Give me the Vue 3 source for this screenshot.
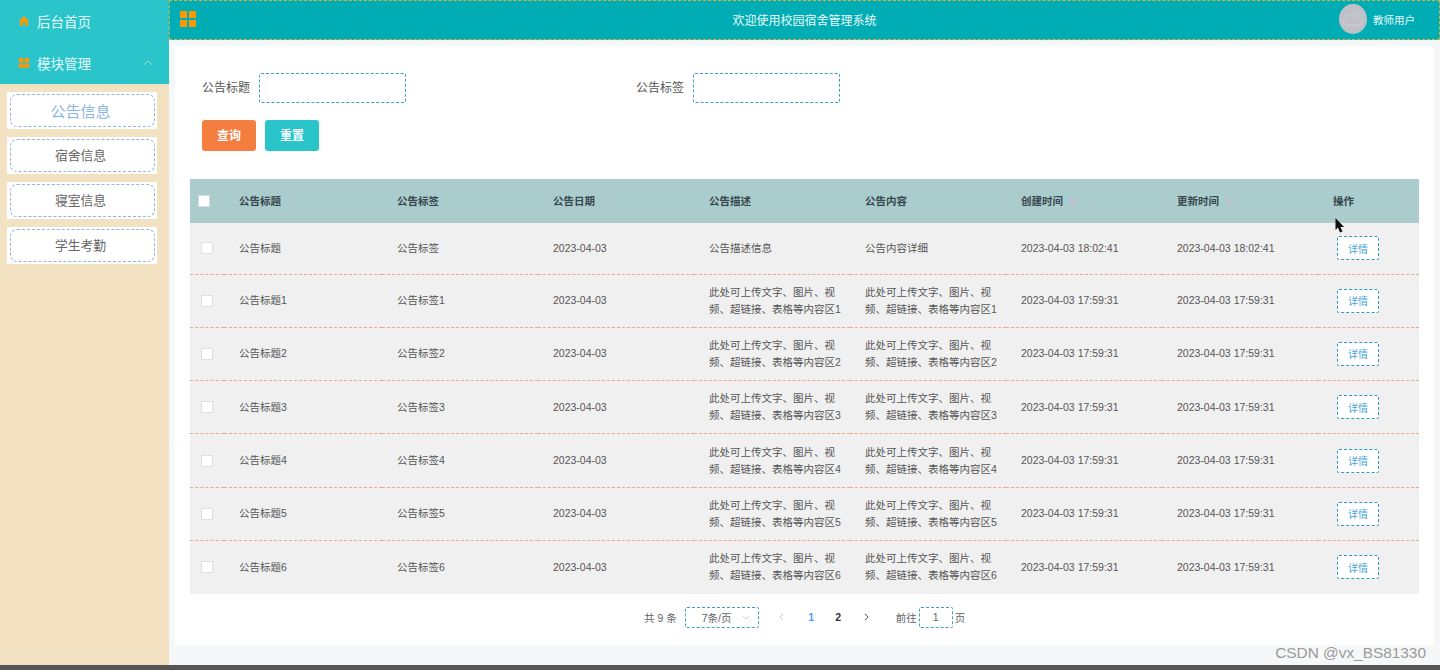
<script setup>
const desc = (n) => `此处可上传文字、图片、视频、超链接、表格等内容区${n}`
const rows = [
  { title: '公告标题', tag: '公告标签', desc: '公告描述信息', content: '公告内容详细', created: '2023-04-03 18:02:41' },
  ...[1, 2, 3, 4, 5, 6].map((n) => ({
    title: `公告标题${n}`,
    tag: `公告标签${n}`,
    desc: desc(n),
    content: desc(n),
    created: '2023-04-03 17:59:31',
  })),
]
const heads = ['公告标题', '公告标签', '公告日期', '公告描述', '公告内容', '创建时间', '更新时间', '操作']
const subs = ['公告信息', '宿舍信息', '寝室信息', '学生考勤']
</script>

<template>
  <div class="page">
    <aside class="side">
      <div class="menu">
        <div class="menu-item first">
          <svg class="mi" viewBox="0 0 10 10"><path d="M5 0 10 5 9 5.6V10H6.4V6.6H3.6V10H1V5.6L0 5Z" fill="#ff9800" /></svg>
          <span>后台首页</span>
        </div>
        <div class="menu-item">
          <svg class="mi" viewBox="0 0 10 10"><g fill="#ff9800"><rect width="4.5" height="4.5" /><rect x="5.5" width="4.5" height="4.5" /><rect y="5.5" width="4.5" height="4.5" /><rect x="5.5" y="5.5" width="4.5" height="4.5" /></g></svg>
          <span>模块管理</span>
          <svg class="chev" viewBox="0 0 10 6"><path d="M.8 5 5 1l4.2 4" fill="none" stroke="#b5d6b8" stroke-width="1" /></svg>
        </div>
      </div>
      <div class="subs">
        <div v-for="(s, i) in subs" :key="s" class="sub" :class="{ on: i === 0 }"><span>{{ s }}</span></div>
      </div>
    </aside>

    <div class="right">
      <header class="top">
        <svg class="grid-ic" viewBox="0 0 16 16"><g fill="#ff9800"><rect width="7" height="7" /><rect x="9" width="7" height="7" /><rect y="9" width="7" height="7" /><rect x="9" y="9" width="7" height="7" /></g></svg>
        <div class="top-title">欢迎使用校园宿舍管理系统</div>
        <div class="user">
          <div class="avatar">
            <svg viewBox="0 0 28 28"><path d="M7 20c-3 0-4-5-1-6 0-4 4-5 6-3 2-4 8-3 8 2 4 0 4 7 0 7Z" fill="none" stroke="#cfd0d6" stroke-width="1" /></svg>
          </div>
          <span>教师用户</span>
        </div>
      </header>

      <main class="main">
        <section class="card">
          <div class="form-row">
            <div class="field"><label>公告标题</label><div class="input"></div></div>
            <div class="field"><label>公告标签</label><div class="input"></div></div>
          </div>
          <div class="btns">
            <button class="btn orange">查询</button>
            <button class="btn teal">重置</button>
          </div>

          <table class="tbl">
            <colgroup>
              <col class="c0" />
              <col class="c1" />
              <col v-for="n in 6" :key="n" class="cn" />
              <col class="cl" />
            </colgroup>
            <thead>
              <tr>
                <th class="chk"><i class="box head-box"></i></th>
                <th v-for="(h, i) in heads" :key="h">
                  <span class="th-text">{{ h }}<span v-if="i === 5 || i === 6" class="sort"></span></span>
                </th>
              </tr>
            </thead>
            <tbody>
              <tr v-for="r in rows" :key="r.title">
                <td class="chk"><i class="box"></i></td>
                <td>{{ r.title }}</td>
                <td>{{ r.tag }}</td>
                <td>2023-04-03</td>
                <td><div class="wrap">{{ r.desc }}</div></td>
                <td><div class="wrap">{{ r.content }}</div></td>
                <td>{{ r.created }}</td>
                <td>{{ r.created }}</td>
                <td><button class="detail">详情</button></td>
              </tr>
            </tbody>
          </table>

          <div class="pager">
            <span>共 9 条</span>
            <div class="select"><span>7条/页</span>
              <svg viewBox="0 0 10 6"><path d="M1 1l4 4 4-4" fill="none" stroke="#c0c4cc" /></svg>
            </div>
            <svg class="arrow left" viewBox="0 0 6 10"><path d="M5 1 1 5l4 4" fill="none" stroke="#c0c4cc" stroke-width="1.2" /></svg>
            <b class="pg cur">1</b>
            <b class="pg">2</b>
            <svg class="arrow next" viewBox="0 0 6 10"><path d="M1 1l4 4-4 4" fill="none" stroke="#444" stroke-width="1.2" /></svg>
            <span class="goto">前往</span>
            <div class="jump">1</div>
            <span>页</span>
          </div>
        </section>
      </main>
      <div class="mark">CSDN @vx_BS81330</div>
    </div>

    <svg class="cursor" viewBox="0 0 10 16"><path d="M.5 0V12L3 9.6 5 14.5 7.5 13.5 5.4 9H9Z" fill="#111" /></svg>
    <div class="bottom"></div>
  </div>
</template>

<style>
html, body { margin: 0; overflow: hidden; }
</style>

<style scoped>
.page {
  position: relative;
  display: flex;
  width: 1440px;
  height: 670px;
  overflow: hidden;
  background: #f6f7f9;
  font-family: "Liberation Sans", "Noto Sans CJK SC", sans-serif;
  color: #444;
}
.side { width: 169px; flex: none; background: #f3e2c1; }
.menu { background: #2ac5cb; }
.menu-item {
  display: flex;
  align-items: center;
  height: 42px;
  padding-left: 19px;
  color: #e4fbfb;
  font-size: 13.5px;
}
.menu-item.first span { margin-top: -1px; }
.mi { width: 10px; height: 10px; margin-right: 8px; flex: none; }
.chev { width: 10px; height: 6px; margin-left: 52px; }
.subs { display: flex; flex-direction: column; gap: 8px; padding: 8px 12px 0 7px; }
.sub {
  height: 37px;
  background: #fff;
  padding: 2px 2px 2px 3px;
  box-sizing: border-box;
}
.sub span {
  display: flex;
  align-items: center;
  justify-content: center;
  height: 100%;
  box-sizing: border-box;
  border: 1px dashed #8fb6de;
  border-radius: 7px;
  padding: 0 4px 2px 0;
  font-size: 12.8px;
  color: #666;
}
.sub.on span { font-size: 15px; color: #8ab6e8; padding-bottom: 1px; }

.right { flex: 1; display: flex; flex-direction: column; position: relative; min-width: 0; }
.top {
  position: relative;
  display: flex;
  align-items: center;
  height: 40px;
  box-sizing: border-box;
  border: 1px dashed #d9b13c;
  background: #00adb5;
  padding-left: 10px;
}
.grid-ic { width: 16px; height: 16px; margin-top: -3px; }
.top-title {
  position: absolute;
  left: 0;
  right: 0;
  top: 10px;
  text-align: center;
  color: #eafafa;
  font-size: 12px;
}
.user {
  position: absolute;
  left: 1169px;
  top: 3px;
  display: flex;
  align-items: center;
  gap: 6px;
  color: #eafafa;
  font-size: 10.5px;
}
.avatar { width: 28px; height: 30px; border-radius: 50%; background: #bfc0c8; }
.avatar svg { display: block; width: 28px; height: 30px; }

.main { padding: 6px 6px 0; }
.card {
  position: relative;
  height: 599px;
  box-sizing: border-box;
  background: #fff;
  padding: 27px 15px 0;
}
.form-row { display: flex; padding-left: 12px; }
.field { display: flex; align-items: center; width: 434px; height: 30px; }
.field label { width: 57px; margin-top: -3px; font-size: 12px; color: #555; }
.input {
  width: 147px;
  height: 30px;
  box-sizing: border-box;
  border: 1px dashed #3b9fc4;
  border-radius: 2px;
}
.btns { display: flex; gap: 9px; margin-top: 17px; padding-left: 12px; }
.btn {
  width: 54px;
  height: 31px;
  border: 0;
  border-radius: 3px;
  color: #fff;
  font: 700 12px "Liberation Sans", "Noto Sans CJK SC", sans-serif;
  padding: 0 0 3px;
}
.orange { background: #f47d40; }
.teal { background: #2ac5cb; }

.tbl {
  width: 1229px;
  margin-top: 28px;
  table-layout: fixed;
  border-collapse: collapse;
  font-size: 10.5px;
  color: #555;
}
.c0 { width: 34px; }
.c1 { width: 158px; }
.cn { width: 156px; }
.cl { width: 101px; }
.tbl th {
  height: 44px;
  padding: 0 15px 2px;
  box-sizing: border-box;
  background: #aacccd;
  color: #37474f;
  font-weight: 700;
  text-align: left;
}
.tbl td {
  height: 53.3px;
  padding: 0 15px;
  box-sizing: border-box;
  background: #f0f0f0;
  border-bottom: 1px dashed #eda78f;
  line-height: 17px;
}
.tbl tr:first-child td { height: 51px; }
.tbl tr:last-child td { border-bottom: 0; }
.wrap { width: 134px; }
.tbl th.chk, .tbl td.chk { padding: 0 0 0 8px; }
.tbl td.chk { padding-left: 11px; }
.box {
  display: block;
  width: 10px;
  height: 10px;
  background: #fff;
  border: 1px solid #dcdfe6;
}
.head-box { border-color: #d8dce0; }
.sort {
  display: inline-block;
  width: 6px;
  height: 8px;
  margin-left: 7px;
  vertical-align: -1px;
  border-radius: 2px;
  background: #bcc3cd;
}
.detail {
  display: block;
  width: 42px;
  height: 24px;
  margin-left: 4px;
  padding: 0;
  background: #fff;
  border: 1px dashed #2f95c4;
  border-radius: 2px;
  color: #4aa3dc;
  font: 10px "Liberation Sans", "Noto Sans CJK SC", sans-serif;
}
.pager {
  display: flex;
  align-items: center;
  height: 21px;
  margin: 13px 0 0 454px;
  font-size: 10.5px;
  color: #606266;
}
.select {
  display: flex;
  align-items: center;
  justify-content: space-between;
  width: 74px;
  height: 21px;
  box-sizing: border-box;
  margin-left: 8px;
  padding: 0 8px 0 16px;
  border: 1px dashed #3b9fc4;
  border-radius: 2px;
}
.select svg { width: 8px; height: 5px; }
.arrow { width: 5px; height: 8px; flex: none; }
.left { margin-left: 20px; }
.pg { width: 27px; text-align: center; color: #303133; font-weight: 700; }
.pg.cur { margin-left: 14px; color: #4aa3f0; }
.next { margin-left: 12px; }
.goto { margin-left: 27px; }
.jump {
  width: 34px;
  height: 21px;
  box-sizing: border-box;
  margin: 0 2px;
  border: 1px dashed #3b9fc4;
  border-radius: 2px;
  text-align: center;
  line-height: 19px;
}
.mark {
  position: absolute;
  right: 14px;
  top: 644px;
  font-size: 15.4px;
  color: #9a9a9a;
}
.cursor { position: absolute; left: 1335px; top: 218px; width: 10px; height: 16px; }
.bottom { position: absolute; left: 0; right: 0; bottom: 0; height: 5px; background: #555; }
</style>
